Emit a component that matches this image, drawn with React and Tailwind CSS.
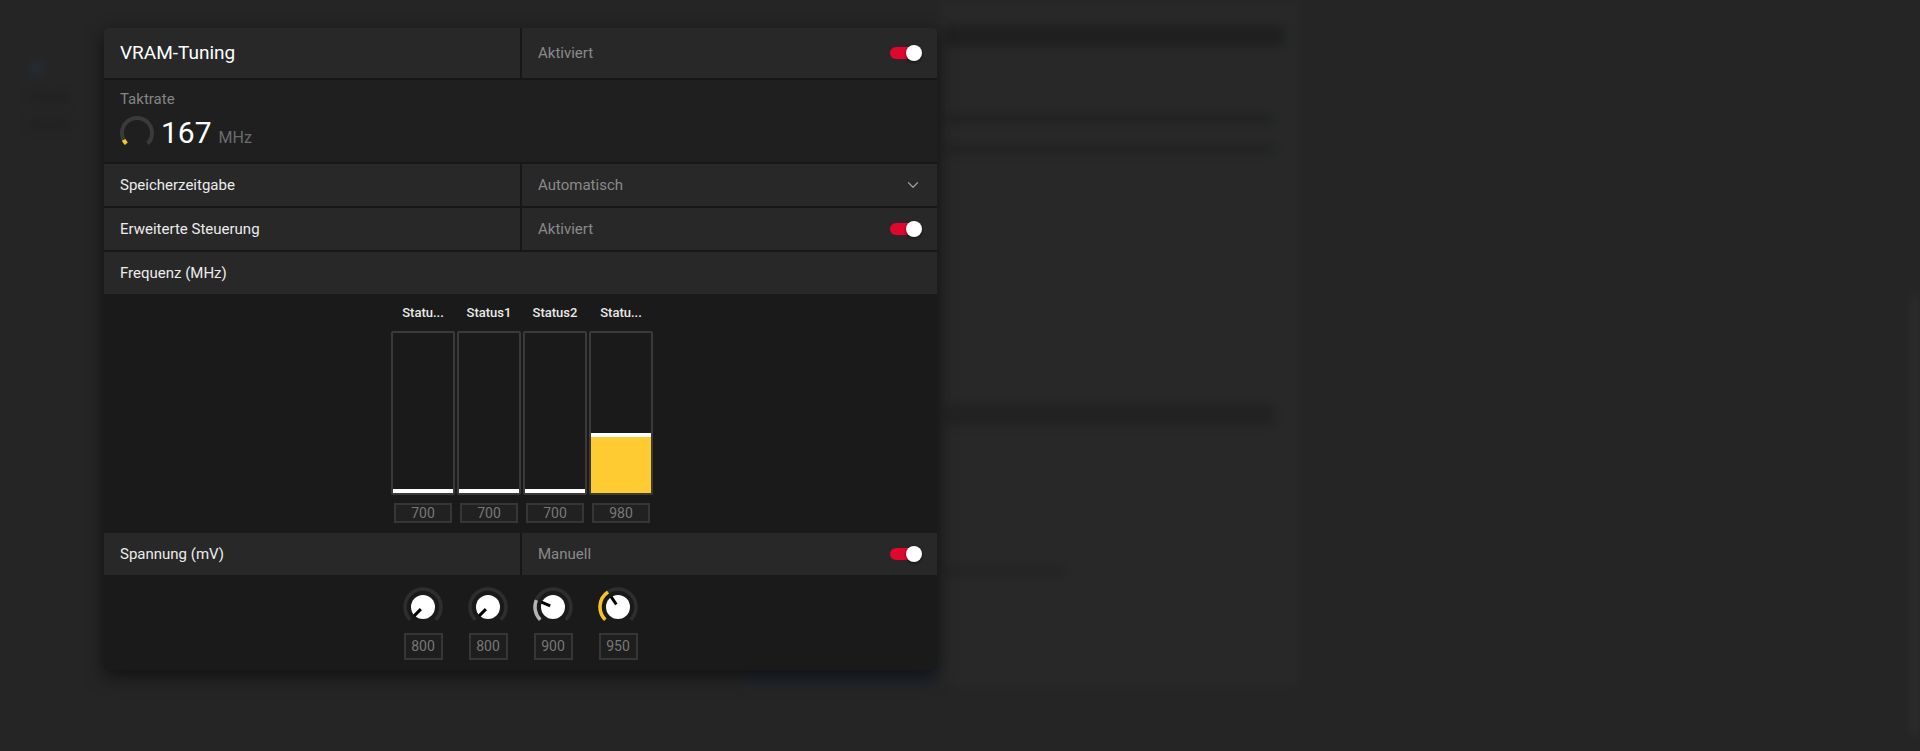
import React from "react";
import { ChevronDown } from "lucide-react";

// winkel im uhrzeigersinn ab 12 uhr
const polar = (c, r, deg) => {
  const a = ((deg - 90) * Math.PI) / 180;
  return [c + r * Math.cos(a), c + r * Math.sin(a)];
};

const arc = (c, r, a0, a1) => {
  const [x0, y0] = polar(c, r, a0);
  const [x1, y1] = polar(c, r, a1);
  const large = a1 - a0 > 180 ? 1 : 0;
  return `M ${x0} ${y0} A ${r} ${r} 0 ${large} 1 ${x1} ${y1}`;
};

function Toggle() {
  return (
    <div className="relative w-[32px] h-[16px] flex items-center">
      <div className="w-[28px] h-[12px] rounded-full bg-[#e0072f]" />
      <div className="absolute right-0 top-0 w-[16px] h-[16px] rounded-full bg-white shadow-[0_1px_3px_rgba(0,0,0,0.6)]" />
    </div>
  );
}

function Sep() {
  return <div className="h-[2px] bg-[#171717]" />;
}

function Row({ label, value, right, split = true }) {
  return (
    <div className="flex h-[42px] bg-[#282828]">
      <div className="w-[416px] flex items-center px-4 text-[15px] text-[#ececec]">{label}</div>
      {split && (
        <>
          <div className="w-[2px] bg-[#171717]" />
          <div className="flex-1 flex items-center justify-between pl-4 pr-[15px] text-[15px] text-[#8a8a8a]">
            <span>{value}</span>
            {right}
          </div>
        </>
      )}
    </div>
  );
}

function Gauge() {
  return (
    <svg width="34" height="34" viewBox="0 0 34 34">
      <path d={arc(17, 15, 225, 495)} fill="none" stroke="#3a3a3a" strokeWidth="4" />
      <path d={arc(17, 15, 225, 243)} fill="none" stroke="#f7c325" strokeWidth="4" />
    </svg>
  );
}

function Knob({ v, color }) {
  const ang = 225 + ((v - 800) / 400) * 270;
  const [x0, y0] = polar(20, 3, ang);
  const [x1, y1] = polar(20, 12.5, ang);
  return (
    <svg width="40" height="40" viewBox="0 0 40 40">
      <path d={arc(20, 18, 225, 495)} fill="none" stroke="#2e2e2e" strokeWidth="3.5" />
      {v > 800 && <path d={arc(20, 18, 225, ang)} fill="none" stroke={color} strokeWidth="3.5" />}
      <circle cx="20" cy="20" r="12" fill="#ffffff" />
      <line x1={x0} y1={y0} x2={x1} y2={y1} stroke="#000" strokeWidth="3" />
    </svg>
  );
}

const states = [
  { label: "Statu...", value: 700 },
  { label: "Status1", value: 700 },
  { label: "Status2", value: 700 },
  { label: "Statu...", value: 980 },
];

const knobs = [
  { v: 800, color: "#b5b5b5" },
  { v: 800, color: "#b5b5b5" },
  { v: 900, color: "#b5b5b5" },
  { v: 950, color: "#f7c325" },
];

function Background() {
  return (
    <div className="flex h-full blur-[5px] opacity-50">
      <div className="w-[104px] flex flex-col gap-[18px] pt-[62px] pl-[30px]">
        <div className="w-[14px] h-[12px] rounded-sm bg-[#22364a]" />
        <div className="w-[40px] h-[10px] bg-[#1e1e1e]" />
        <div className="w-[40px] h-[10px] bg-[#1e1e1e]" />
      </div>
      <div className="w-[836px] flex flex-col justify-end pb-[65px]">
        <div className="ml-[637px] w-[214px] h-[25px] bg-[#1d2633]" />
      </div>
      <div className="w-[360px] flex flex-col gap-[20px] pt-[26px] pl-[4px] bg-[#292b2a] mb-[64px]">
        <div className="w-[340px] h-[20px] bg-[#1a1a1a]" />
        <div className="w-[330px] h-[10px] bg-[#202020] mt-[48px]" />
        <div className="w-[330px] h-[10px] bg-[#202020]" />
        <div className="w-[330px] h-[22px] bg-[#202020] mt-[230px]" />
        <div className="w-[120px] h-[10px] bg-[#222222] mt-[120px]" />
      </div>
      <div className="flex-1" />
      <div className="w-[8px] pt-[294px] pb-[16px] flex">
        <div className="w-[6px] h-full bg-[#3a3a3a] rounded-sm" />
      </div>
    </div>
  );
}

export default function App() {
  return (
    <div className="relative h-[751px] overflow-hidden bg-[#252525] font-[family-name:Roboto,'Noto_Sans',sans-serif]">
      <Background />

      <div className="absolute left-[104px] top-[28px] w-[833px] rounded-t-[4px] overflow-hidden bg-[#1a1a1a] shadow-[0_6px_18px_rgba(0,0,0,0.55)]">
        {/* kopfzeile */}
        <div className="flex h-[50px] bg-[#282828]">
          <div className="w-[416px] flex items-center px-4 text-[19px] text-white">VRAM-Tuning</div>
          <div className="w-[2px] bg-[#171717]" />
          <div className="flex-1 flex items-center justify-between pl-4 pr-[15px] text-[15px] text-[#8a8a8a]">
            <span>Aktiviert</span>
            <Toggle />
          </div>
        </div>
        <Sep />

        {/* taktrate */}
        <div className="h-[82px] bg-[#1f1f1f] px-4 pt-[9px]">
          <div className="text-[15px] leading-5 text-[#858585]">Taktrate</div>
          <div className="flex items-center gap-[7px] mt-[7px]">
            <Gauge />
            <div className="flex items-baseline gap-[7px]">
              <span className="text-[30px] leading-none text-white">167</span>
              <span className="text-[16px] leading-none text-[#6c6c6c]">MHz</span>
            </div>
          </div>
        </div>
        <Sep />

        <Row
          label="Speicherzeitgabe"
          value="Automatisch"
          right={<ChevronDown size={18} strokeWidth={1.75} className="text-[#9a9a9a]" />}
        />
        <Sep />
        <Row label="Erweiterte Steuerung" value="Aktiviert" right={<Toggle />} />
        <Sep />
        <Row label="Frequenz (MHz)" split={false} />

        {/* frequenz balken */}
        <div className="bg-[#1a1a1a] pt-[11px] pb-[10px] pl-[3px] flex justify-center gap-[2px]">
          {states.map((s, i) => {
            const fill = Math.round((s.value - 700) * 0.2);
            return (
              <div key={i} className="w-[64px] flex flex-col items-center">
                <div className="text-[13px] leading-4 font-medium text-[#eaeaea]">{s.label}</div>
                <div className="mt-[10px] w-[64px] h-[164px] border-2 border-[#3a3a3a] rounded-[2px] bg-[#1a1a1a] flex flex-col justify-end">
                  <div className="h-[4px] bg-white" />
                  {fill > 0 && <div className="bg-[#fecb32]" style={{ height: fill }} />}
                </div>
                <div className="mt-[8px] w-[58px] h-[20px] border-2 border-[#363636] bg-[#212121] flex items-center justify-center text-[14px] text-[#787878]">
                  {s.value}
                </div>
              </div>
            );
          })}
        </div>

        <Row label="Spannung (mV)" value="Manuell" right={<Toggle />} />

        {/* spannung knoepfe */}
        <div className="bg-[#1a1a1a] pt-[12px] pb-[10px] flex justify-center gap-[2px]">
          {knobs.map((k, i) => (
            <div key={i} className="w-[63px] flex flex-col items-center">
              <Knob v={k.v} color={k.color} />
              <div className="mt-[6px] w-[39px] h-[27px] border-2 border-[#363636] bg-[#1e1e1e] flex items-center justify-center text-[14px] text-[#787878]">
                {k.v}
              </div>
            </div>
          ))}
        </div>
      </div>
    </div>
  );
}
